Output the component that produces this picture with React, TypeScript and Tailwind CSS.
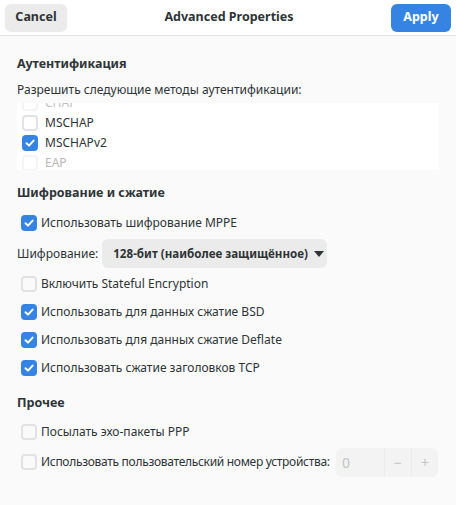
import React from "react";

const Check = ({ checked, dim }: { checked?: boolean; dim?: boolean }) =>
  checked ? (
    <span className="flex h-[16px] w-[16px] shrink-0 items-center justify-center rounded-[4px] bg-[#3584e4]">
      <svg width="12" height="12" viewBox="0 0 12 12" fill="none">
        <path d="M2.5 6.2 L5 8.6 L9.6 3.6" stroke="white" strokeWidth="2" strokeLinecap="round" strokeLinejoin="round" />
      </svg>
    </span>
  ) : (
    <span
      className={
        "h-[16px] w-[16px] shrink-0 rounded-[4px] border-2 " +
        (dim ? "border-[#f4f4f4]" : "border-[#e2e2e2]")
      }
    />
  );

const Row = ({ label, checked }: { label: string; checked?: boolean }) => (
  <div className="flex h-[28px] items-center gap-[4px] whitespace-nowrap pl-[21px]">
    <Check checked={checked} />
    <span className="text-[#2e3436]">{label}</span>
  </div>
);

export default function App() {
  return (
    <div
      className="flex h-[505px] w-[456px] flex-col bg-[#fafafa] text-[12px] text-[#2e3436]"
      style={{ fontFamily: '"Noto Sans", "Open Sans", sans-serif' }}
    >
      <div className="flex h-[36px] shrink-0 items-center justify-between border-b border-[#e4e4e4] bg-white px-[5px]">
        <button className="h-[28px] w-[62px] rounded-[6px] bg-[#ebebeb] text-[12.5px] font-bold text-[#2e3436]">Cancel</button>
        <span className="text-[12.5px] font-bold">Advanced Properties</span>
        <button className="h-[28px] w-[60px] rounded-[6px] bg-[#3584e4] text-[12.5px] font-bold text-white">Apply</button>
      </div>

      <div className="flex flex-col px-[17px]">
        <div className="mt-[18px] h-[20px] text-[12.5px] font-bold leading-[20px]">Аутентификация</div>
        <div className="mt-[6px] h-[20px] whitespace-nowrap leading-[20px]">Разрешить следующие методы аутентификации:</div>
        <div className="relative mt-[3px] h-[67px] overflow-hidden bg-white">
          <div className="absolute left-0 right-0 top-[-10px] flex flex-col">
            <div className="flex h-[20px] items-center gap-[7px] pl-[5px]">
              <Check dim />
              <span className="text-[#c0c0c0]">CHAP</span>
            </div>
            <div className="flex h-[20px] items-center gap-[7px] pl-[5px]">
              <Check />
              <span>MSCHAP</span>
            </div>
            <div className="flex h-[20px] items-center gap-[7px] pl-[5px]">
              <Check checked />
              <span>MSCHAPv2</span>
            </div>
            <div className="flex h-[20px] items-center gap-[7px] pl-[5px]">
              <Check dim />
              <span className="text-[#b8b8b8]">EAP</span>
            </div>
          </div>
        </div>

        <div className="mt-[13px] h-[20px] text-[12.5px] font-bold leading-[20px]">Шифрование и сжатие</div>
      </div>

      <div className="mt-[6px] flex flex-col">
        <Row label="Использовать шифрование MPPE" checked />
        <div className="flex items-center gap-[4px] whitespace-nowrap px-[17px] py-[2px]">
          <span>Шифрование:</span>
          <div className="flex h-[29px] w-[225px] items-center gap-[6px] rounded-[6px] bg-[#ebebeb] pl-[11px] text-[11.6px] font-bold">
            <span>128-бит (наиболее защищённое)</span>
            <svg width="10" height="6" viewBox="0 0 10 6">
              <path d="M0 0 L10 0 L5 6 Z" fill="#2e3436" />
            </svg>
          </div>
        </div>
        <Row label="Включить Stateful Encryption" />
        <Row label="Использовать для данных сжатие BSD" checked />
        <Row label="Использовать для данных сжатие Deflate" checked />
        <Row label="Использовать сжатие заголовков TCP" checked />
      </div>

      <div className="mt-[11px] h-[20px] px-[17px] text-[12.5px] font-bold leading-[20px]">Прочее</div>
      <div className="mt-[5px] flex flex-col">
        <Row label="Посылать эхо-пакеты PPP" />
        <div className="flex h-[32px] items-center whitespace-nowrap pl-[21px] pr-[18px]">
          <Check />
          <span className="ml-[4px] tracking-[-0.3px]">Использовать пользовательский номер устройства:</span>
          <div className="ml-auto flex h-[29px] w-[102px] items-stretch rounded-[6px] bg-[#f3f3f3] text-[14px] text-[#c4c4c4]">
            <span className="flex flex-1 items-center pl-[6px]">0</span>
            <span className="flex w-[27px] items-center justify-center border-l border-[#ebebeb]">−</span>
            <span className="flex w-[27px] items-center justify-center border-l border-[#ebebeb]">+</span>
          </div>
        </div>
      </div>
    </div>
  );
}
